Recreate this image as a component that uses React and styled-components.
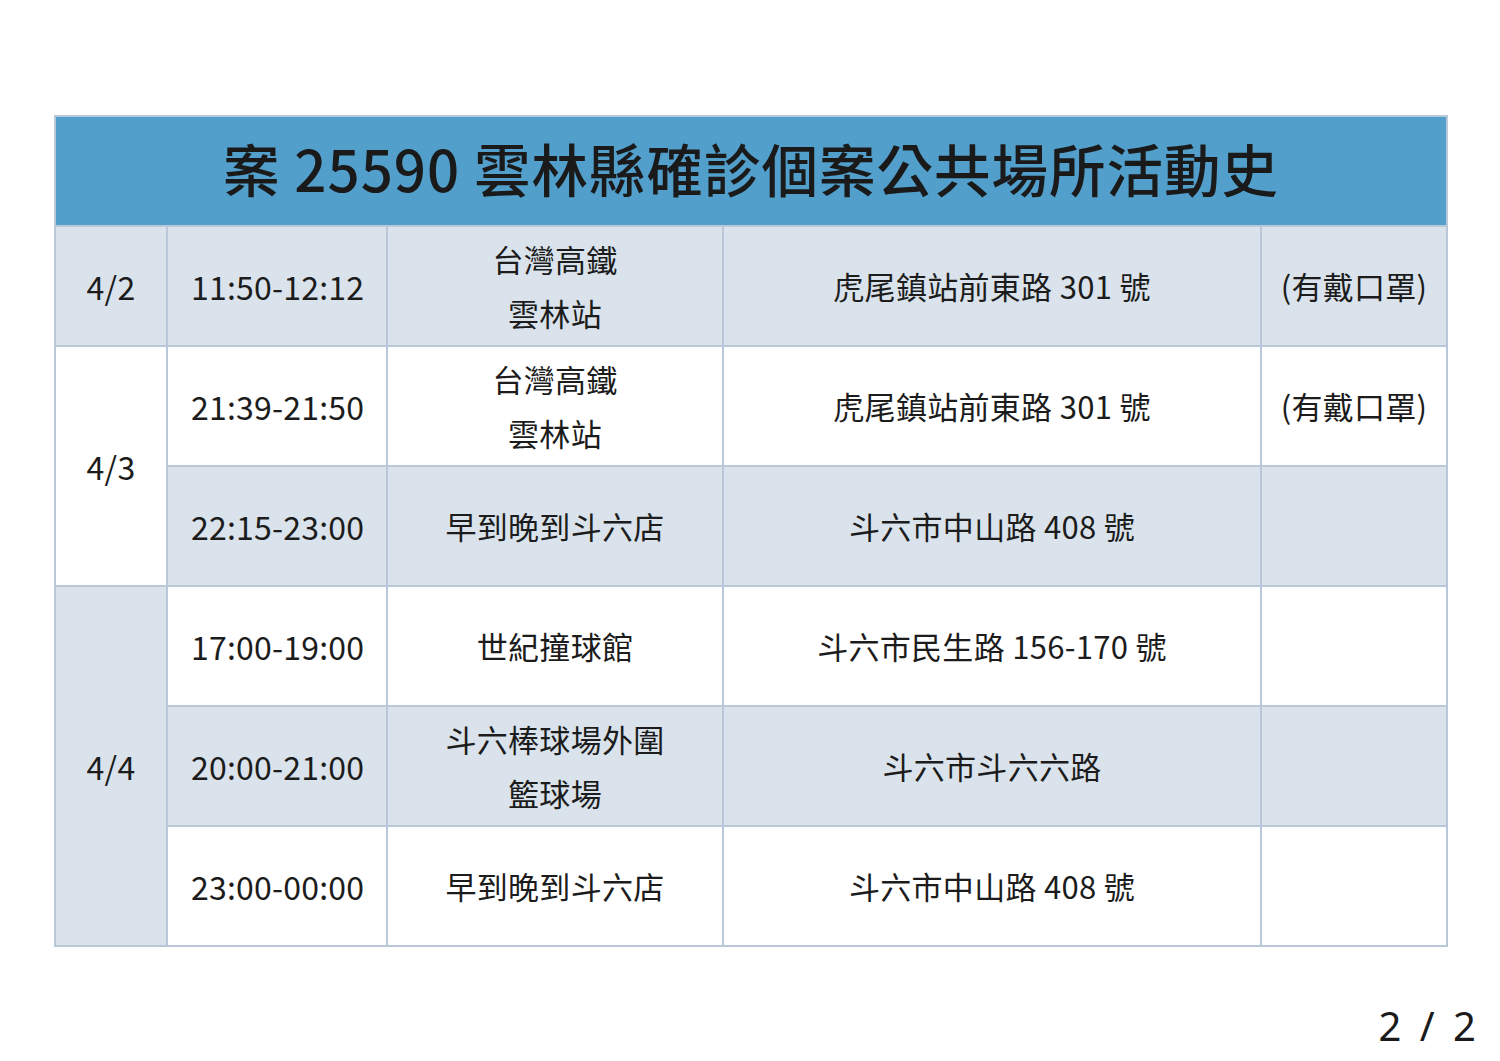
import React from 'react';
import styled, { createGlobalStyle } from 'styled-components';

const GlobalStyle = createGlobalStyle`
  html, body {
    margin: 0;
    padding: 0;
    background: #ffffff;
  }
  body {
    font-family: "Noto Sans CJK TC", "Noto Sans", sans-serif;
    color: #1c1c1c;
  }
`;

const Page = styled.div`
  width: 1500px;
  height: 1061px;
  box-sizing: border-box;
  padding: 115px 0 0 54px;
  background: #ffffff;
  overflow: hidden;
`;

const Table = styled.table`
  width: 1392px;
  border-collapse: collapse;
  table-layout: fixed;
  border: 2px solid #b9c7d8;
`;

const Col = styled.col`
  width: ${(p) => p.$w}px;
`;

const TitleCell = styled.th`
  height: 100px;
  padding: 0 0 8px;
  background: #529fcb;
  color: #1a1a1a;
  font-size: 56.5px;
  line-height: 70px;
  font-weight: 500;
  letter-spacing: 1px;
  text-align: center;
  border-bottom: 2px solid #b9c7d8;
`;

const Cell = styled.td`
  height: 118px;
  padding: 0;
  text-align: center;
  vertical-align: middle;
  font-size: 31px;
  line-height: 54px;
  letter-spacing: 0.3px;
  color: #1c1c1c;
  background: ${(p) => (p.$shade ? '#dae3eb' : '#ffffff')};
  border: 2px solid #b9c7d8;
`;

const TimeCell = styled(Cell)`
  text-align: left;
  padding-left: 23px;
  font-size: 32px;
  letter-spacing: 0.2px;
`;

const DateCell = styled(Cell)`
  font-size: 32px;
`;

const Footer = styled.div`
  margin-top: 57px;
  padding-right: 20px;
  text-align: right;
  font-family: "Noto Sans", "Open Sans", sans-serif;
  font-size: 40px;
  line-height: 44px;
  color: #1a1a1a;
  letter-spacing: 4px;
`;

const rows = [
  { date: '4/2', span: 1, dateShade: true, time: '11:50-12:12', place: ['台灣高鐵', '雲林站'], addr: '虎尾鎮站前東路 301 號', note: '(有戴口罩)', shade: true },
  { date: '4/3', span: 2, dateShade: false, time: '21:39-21:50', place: ['台灣高鐵', '雲林站'], addr: '虎尾鎮站前東路 301 號', note: '(有戴口罩)', shade: false },
  { time: '22:15-23:00', place: ['早到晚到斗六店'], addr: '斗六市中山路 408 號', note: '', shade: true },
  { date: '4/4', span: 3, dateShade: true, time: '17:00-19:00', place: ['世紀撞球館'], addr: '斗六市民生路 156-170 號', note: '', shade: false },
  { time: '20:00-21:00', place: ['斗六棒球場外圍', '籃球場'], addr: '斗六市斗六六路', note: '', shade: true },
  { time: '23:00-00:00', place: ['早到晚到斗六店'], addr: '斗六市中山路 408 號', note: '', shade: false },
];

export default function App() {
  return (
    <>
      <GlobalStyle />
      <Page>
        <Table>
          <colgroup>
            <Col $w={112} />
            <Col $w={220} />
            <Col $w={336} />
            <Col $w={538} />
            <Col $w={186} />
          </colgroup>
          <thead>
            <tr>
              <TitleCell colSpan={5}>案 25590 雲林縣確診個案公共場所活動史</TitleCell>
            </tr>
          </thead>
          <tbody>
            {rows.map((r, i) => (
              <tr key={i}>
                {r.date && (
                  <DateCell rowSpan={r.span} $shade={r.dateShade}>
                    {r.date}
                  </DateCell>
                )}
                <TimeCell $shade={r.shade}>{r.time}</TimeCell>
                <Cell $shade={r.shade}>
                  {r.place.map((p, j) => (
                    <div key={j}>{p}</div>
                  ))}
                </Cell>
                <Cell $shade={r.shade}>{r.addr}</Cell>
                <Cell $shade={r.shade}>{r.note}</Cell>
              </tr>
            ))}
          </tbody>
        </Table>
        <Footer>2 / 2</Footer>
      </Page>
    </>
  );
}
